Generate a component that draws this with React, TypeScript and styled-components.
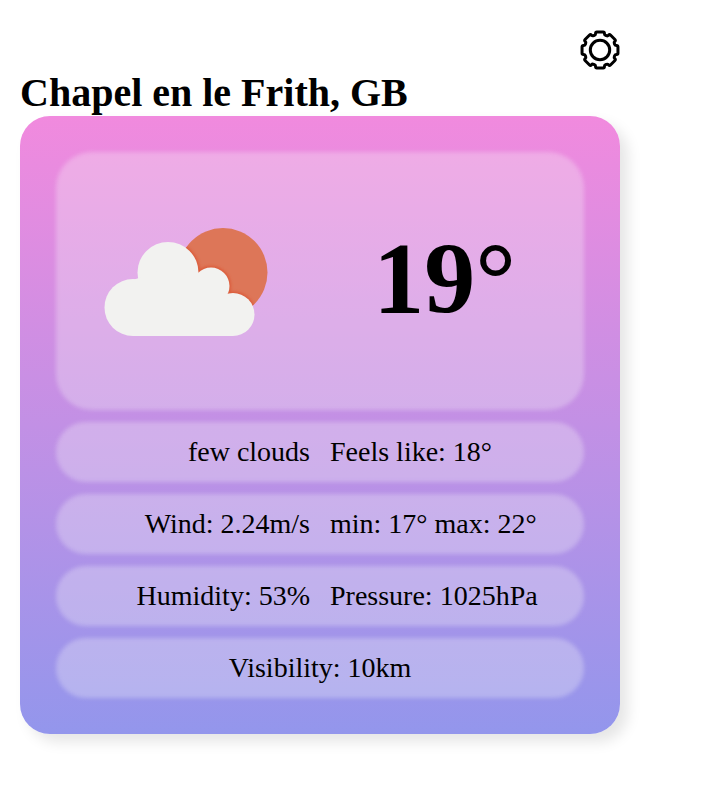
import React from "react";
import styled, { createGlobalStyle } from "styled-components";

const GlobalStyle = createGlobalStyle`
  *, *::before, *::after { box-sizing: border-box; }
  body {
    margin: 0;
    background: #fff;
    color: #000;
    font-family: "Liberation Serif", "Times New Roman", serif;
  }
`;

const Page = styled.main`
  max-width: 640px;
  padding: 30px 20px 60px;
`;

const TopBar = styled.header`
  display: flex;
  justify-content: flex-end;
`;

const SettingsButton = styled.button`
  display: flex;
  padding: 0;
  border: 0;
  background: none;
  color: inherit;
  cursor: pointer;
`;

const Place = styled.h1`
  margin: 0;
  font-size: 40px;
  line-height: 46px;
`;

const Card = styled.section`
  display: flex;
  flex-direction: column;
  gap: 12px;
  padding: 36px;
  border-radius: 30px;
  background: linear-gradient(#f18ade, #9396ec);
  box-shadow: 8px 8px 14px rgba(0, 0, 0, 0.1);
`;

const Glass = styled.div`
  position: relative;
  isolation: isolate;

  &::before {
    content: "";
    position: absolute;
    inset: 0;
    z-index: -1;
    border-radius: 36px;
    background: rgba(250, 250, 250, 0.3);
    filter: blur(2px);
  }
`;

const Summary = styled(Glass)`
  display: flex;
  align-items: center;
  justify-content: space-between;
  min-height: 258px;
  padding: 2px 68px 0 48px;
`;

const Temperature = styled.strong`
  padding-bottom: 6px;
  font-size: 102px;
  line-height: 120px;
`;

const Row = styled(Glass)`
  display: flex;
  align-items: center;
  justify-content: center;
  gap: 20px;
  min-height: 60px;
  font-size: 28px;
  line-height: 32px;
`;

const Detail = styled.span<{ $align?: "left" | "right" }>`
  flex: ${(p) => (p.$align ? "1 1 0" : "0 1 auto")};
  text-align: ${(p) => p.$align ?? "center"};
`;

type Point = [number, number];

const gearPath = (() => {
  const profile: Point[] = [
    [-14, 18.5],
    [14, 18.5],
    [16, 15.8],
    [29, 15.8],
  ];
  const points: Point[] = [];
  for (let tooth = 0; tooth < 8; tooth++) {
    for (const [angle, radius] of profile) {
      const a = ((tooth * 45 + angle - 90) * Math.PI) / 180;
      points.push([20 + radius * Math.cos(a), 20 + radius * Math.sin(a)]);
    }
  }
  const toward = ([x, y]: Point, [tx, ty]: Point) => {
    const t = Math.min(1.3 / Math.hypot(tx - x, ty - y), 0.5);
    return `${(x + (tx - x) * t).toFixed(2)} ${(y + (ty - y) * t).toFixed(2)}`;
  };
  const corners = points.map((p, i) => {
    const before = points[(i + points.length - 1) % points.length];
    const after = points[(i + 1) % points.length];
    return `${toward(p, before)}Q${p[0].toFixed(2)} ${p[1].toFixed(2)} ${toward(p, after)}`;
  });
  return `M${corners.join("L")}Z`;
})();

function GearIcon() {
  return (
    <svg width="40" height="40" viewBox="0 0 40 40" fill="none" stroke="currentColor" strokeWidth="3" strokeLinejoin="round" aria-hidden="true">
      <path d={gearPath} />
      <circle cx="20" cy="20" r="9.7" />
    </svg>
  );
}

function FewCloudsIcon() {
  return (
    <svg width="164" height="108" viewBox="0 0 164 108" role="img" aria-label="few clouds">
      <defs>
        <clipPath id="sun"><circle cx="119" cy="44.5" r="44.5" /></clipPath>
        <filter id="soft" x="-10%" y="-10%" width="120%" height="120%">
          <feGaussianBlur stdDeviation="1.5" />
        </filter>
        <g id="cloud">
          <circle cx="64" cy="44.5" r="30.5" />
          <circle cx="29" cy="79.5" r="28.5" />
          <circle cx="107" cy="58" r="18.5" />
          <circle cx="129" cy="86.5" r="21.5" />
          <path d="M29 108V52L64 40L107 56L129 70V108Z" />
        </g>
      </defs>
      <circle cx="119" cy="44.5" r="44.5" fill="#dd7658" />
      <g clipPath="url(#sun)">
        <use href="#cloud" fill="#dc5a38" stroke="#dc5a38" strokeWidth="3" filter="url(#soft)" />
      </g>
      <use href="#cloud" fill="#f2f2f0" />
    </svg>
  );
}

const details: string[][] = [
  ["few clouds", "Feels like: 18°"],
  ["Wind: 2.24m/s", "min: 17° max: 22°"],
  ["Humidity: 53%", "Pressure: 1025hPa"],
  ["Visibility: 10km"],
];

export default function App() {
  return (
    <>
      <GlobalStyle />
      <Page>
        <TopBar>
          <SettingsButton type="button" aria-label="Settings">
            <GearIcon />
          </SettingsButton>
        </TopBar>
        <Place>Chapel en le Frith, GB</Place>
        <Card>
          <Summary>
            <FewCloudsIcon />
            <Temperature>19°</Temperature>
          </Summary>
          {details.map((items) => (
            <Row key={items[0]}>
              {items.map((text, i) => (
                <Detail key={text} $align={items.length === 1 ? undefined : i === 0 ? "right" : "left"}>
                  {text}
                </Detail>
              ))}
            </Row>
          ))}
        </Card>
      </Page>
    </>
  );
}
